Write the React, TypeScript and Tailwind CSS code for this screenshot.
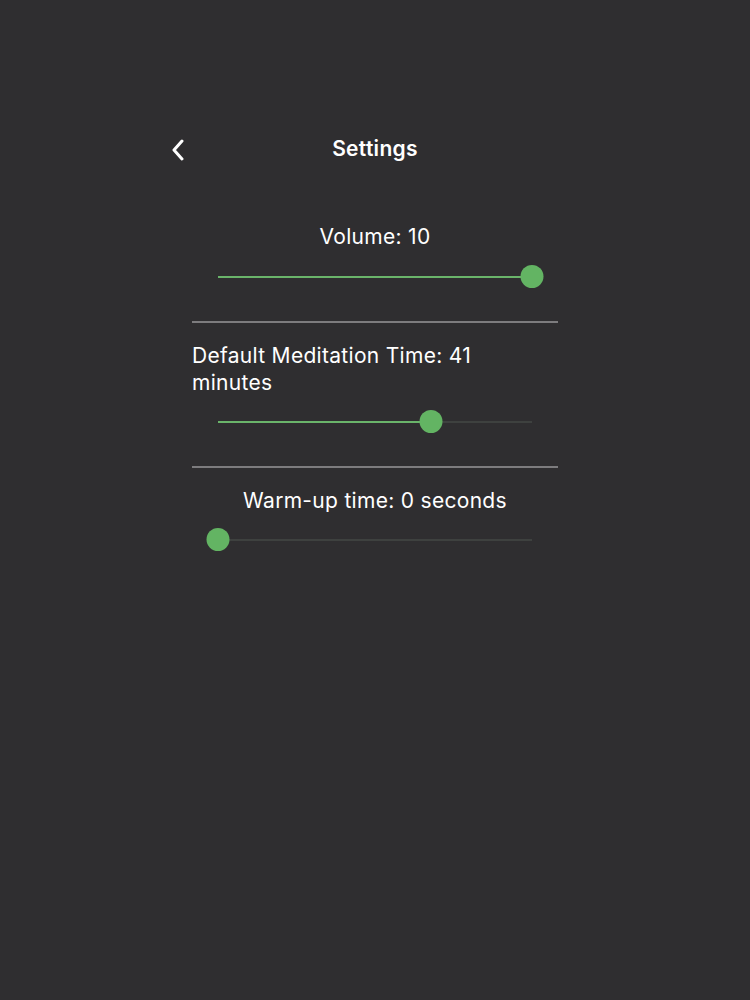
import React, { useState } from 'react';

interface SliderRowProps {
  value: number;
  min: number;
  max: number;
}

// Flat green slider with round thumb; thumb centre sits on the track ends
const Slider: React.FC<SliderRowProps> = ({ value, min, max }) => {
  const pct = ((value - min) / (max - min)) * 100;
  return (
    <div className="px-[26px]">
      <div className="relative h-[24px]">
        <div className="absolute left-0 right-0 top-[11px] h-[2px] bg-[#3e413f]" />
        <div
          className="absolute left-0 top-[11px] h-[2px] bg-[#6ab46a]"
          style={{ width: `${pct}%` }}
        />
        <div
          className="absolute top-0 h-[23px] w-[23px] -translate-x-1/2 rounded-full bg-[#63b463]"
          style={{ left: `${pct}%` }}
        />
      </div>
    </div>
  );
};

const App: React.FC = () => {
  const [volume] = useState(10);
  const [meditation] = useState(41);
  const [warmup] = useState(0);

  return (
    <div
      className="min-h-[1000px] w-full bg-[#2f2e30] text-white"
      style={{ fontFamily: 'Inter, "Noto Sans", sans-serif' }}
    >
      <div className="mx-auto w-[366px] pt-[135px]">
        {/* Header */}
        <div className="relative flex h-[28px] items-center justify-center">
          <button className="absolute left-[-24px] top-[3px] flex h-[24px] w-[20px] items-center justify-center">
            <svg width="14" height="22" viewBox="0 0 14 22" fill="none">
              <path
                d="M11 2 L3 11 L11 20"
                stroke="white"
                strokeWidth="3"
                strokeLinecap="round"
                strokeLinejoin="round"
              />
            </svg>
          </button>
          <h1 className="text-[21px] font-semibold tracking-[0.3px]">Settings</h1>
        </div>

        {/* Volume */}
        <div className="pt-[60px] pb-[32px]">
          <p className="text-center text-[21px] leading-[28px] tracking-[0.3px]">Volume: {volume}</p>
          <div className="mt-[14px]">
            <Slider value={volume} min={0} max={10} />
          </div>
        </div>

        <div className="h-[2px] bg-[#7d7c7e]" />

        {/* Meditation time */}
        <div className="pt-[19px] pb-[32px]">
          <p className="max-w-[310px] text-[21px] leading-[27px] tracking-[0.3px]">
            Default Meditation Time: {meditation} minutes
          </p>
          <div className="mt-[14px]">
            <Slider value={meditation} min={1} max={60} />
          </div>
        </div>

        <div className="h-[2px] bg-[#7d7c7e]" />

        {/* Warm-up */}
        <div className="pt-[19px]">
          <p className="text-center text-[21px] leading-[28px] tracking-[0.3px]">
            Warm-up time: {warmup} seconds
          </p>
          <div className="mt-[13px]">
            <Slider value={warmup} min={0} max={60} />
          </div>
        </div>
      </div>
    </div>
  );
};

export default App;
